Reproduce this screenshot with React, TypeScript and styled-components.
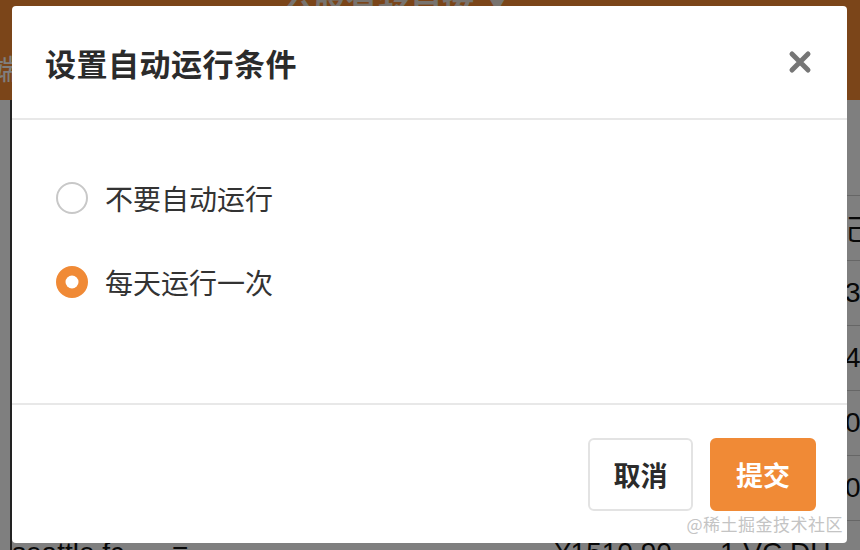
import React, { useState } from 'react';
import styled, { createGlobalStyle, css } from 'styled-components';

const GlobalStyle = createGlobalStyle`
  html, body {
    margin: 0;
    padding: 0;
    width: 860px;
    height: 550px;
    overflow: hidden;
    font-family: 'Noto Sans CJK SC', 'Noto Sans', sans-serif;
  }
`;

const Page = styled.div`
  position: relative;
  width: 860px;
  height: 550px;
  overflow: hidden;
  background: #fff;
`;

/* page behind the dialog */
const TopBar = styled.div`
  height: 100px;
  background: #f68b33;
  color: #fff;
  display: flex;
  flex-direction: column;
  justify-content: space-between;
  padding: 0 0 12px 0;
  box-sizing: border-box;
`;

const TopTitle = styled.div`
  font-size: 32px;
  font-weight: 700;
  line-height: 1;
  margin-top: -20px;
  padding-left: 282px;
  color: #f0e6dc;
`;

const TopSub = styled.div`
  font-size: 28px;
  margin-left: -8px;
`;

const Table = styled.div`
  border-left: 2px solid #444;
  margin-left: 10px;
`;

const Row = styled.div<{ tall?: boolean }>`
  display: grid;
  grid-template-columns: 130px 410px 150px 143px 1fr;
  height: ${(p) => (p.tall ? '95px' : '64px')};
  border-bottom: 1px solid #ccc;
  align-items: center;
  color: #111;
  font-size: 28px;
  font-family: 'Liberation Sans', 'Noto Sans CJK SC', sans-serif;
`;

const Cell = styled.div<{ indent?: number }>`
  white-space: nowrap;
  overflow: hidden;
  padding-left: ${(p) => p.indent || 0}px;
`;

const Overlay = styled.div`
  position: absolute;
  inset: 0;
  background: rgba(0, 0, 0, 0.5);
`;

/* dialog */
const Modal = styled.div`
  position: absolute;
  left: 12px;
  top: 6px;
  width: 835px;
  height: 537px;
  background: #fff;
  border-radius: 4px;
  display: flex;
  flex-direction: column;
`;

const Header = styled.div`
  height: 112px;
  display: flex;
  align-items: center;
  justify-content: space-between;
  padding: 0 35px 0 33px;
  border-bottom: 2px solid #e8e8e8;
`;

const Title = styled.h2`
  margin: 0;
  font-size: 31px;
  font-weight: 700;
  color: #2b2b2b;
  letter-spacing: 0.5px;
`;

const CloseButton = styled.button`
  border: none;
  background: transparent;
  padding: 0;
  width: 24px;
  height: 24px;
  cursor: pointer;
  display: flex;
`;

const Body = styled.div`
  flex: 1;
  display: flex;
  flex-direction: column;
  gap: 52px;
  padding: 62px 44px 0;
  border-bottom: 2px solid #e8e8e8;
`;

const Option = styled.label`
  display: flex;
  align-items: center;
  gap: 17px;
  cursor: pointer;
  font-size: 28px;
  color: #333;
  line-height: 32px;
`;

const Radio = styled.span<{ checked: boolean }>`
  width: 32px;
  height: 32px;
  box-sizing: border-box;
  border-radius: 50%;
  border: 2px solid #c8c8c8;
  background: #fff;
  position: relative;
  flex-shrink: 0;

  ${(p) =>
    p.checked &&
    css`
      border-color: #f08a36;
      background: #f08a36;

      &::after {
        content: '';
        position: absolute;
        width: 13px;
        height: 13px;
        border-radius: 50%;
        background: #fff;
        left: 50%;
        top: 50%;
        transform: translate(-50%, -50%);
      }
    `}
`;

const Footer = styled.div`
  height: 138px;
  display: flex;
  justify-content: flex-end;
  align-items: center;
  gap: 17px;
  padding: 0 31px 0 0;
`;

const Button = styled.button<{ primary?: boolean }>`
  height: 73px;
  width: ${(p) => (p.primary ? '106px' : '105px')};
  border-radius: 6px;
  font-family: inherit;
  font-size: 27px;
  font-weight: 700;
  cursor: pointer;
  border: 2px solid ${(p) => (p.primary ? '#f08a36' : '#e3e3e3')};
  background: ${(p) => (p.primary ? '#f08a36' : '#fff')};
  color: ${(p) => (p.primary ? '#fff' : '#2b2b2b')};
`;

const Watermark = styled.div`
  position: absolute;
  right: 17px;
  bottom: 14px;
  font-size: 17px;
  color: #c4c4c4;
  letter-spacing: 0.5px;
`;

const options = ['不要自动运行', '每天运行一次'];

const rightCol = ['', '己', '3', '4', '0', '0'];

const App = () => {
  const [selected, setSelected] = useState(1);

  return (
    <Page>
      <GlobalStyle />
      <TopBar>
        <TopTitle>公股有转自接 ▼</TopTitle>
        <TopSub>端</TopSub>
      </TopBar>
      <Table>
        {rightCol.map((v, i) => (
          <Row key={i} tall={i === 0}>
            <Cell>{i === 0 ? '◆' : i === 4 ? '朋' : ''}</Cell>
            <Cell />
            <Cell />
            <Cell />
            <Cell>{v}</Cell>
          </Row>
        ))}
        <Row>
          <Cell>seattle fc</Cell>
          <Cell indent={30}>≡</Cell>
          <Cell indent={3}>¥1510.90</Cell>
          <Cell indent={18}>1 VC DU</Cell>
          <Cell />
        </Row>
      </Table>
      <Overlay />

      <Modal>
        <Header>
          <Title>设置自动运行条件</Title>
          <CloseButton aria-label="close">
            <svg width="24" height="24" viewBox="0 0 24 24">
              <path d="M4 4 L20 20 M20 4 L4 20" stroke="#767676" strokeWidth="5" strokeLinecap="round" />
            </svg>
          </CloseButton>
        </Header>
        <Body>
          {options.map((label, i) => (
            <Option key={label} onClick={() => setSelected(i)}>
              <Radio checked={selected === i} />
              {label}
            </Option>
          ))}
        </Body>
        <Footer>
          <Button>取消</Button>
          <Button primary>提交</Button>
        </Footer>
      </Modal>
      <Watermark>@稀土掘金技术社区</Watermark>
    </Page>
  );
};

export default App;
